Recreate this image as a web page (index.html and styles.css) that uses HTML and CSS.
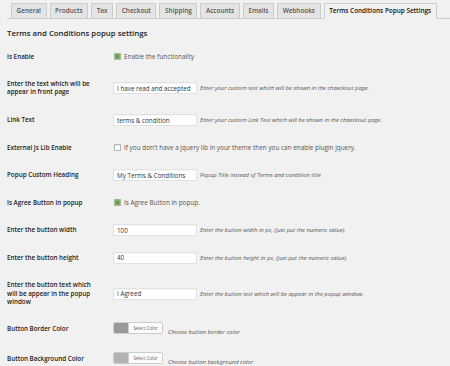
FILE: index.html
```html
<!DOCTYPE html>
<html lang="en">
<head>
  <meta charset="UTF-8">
  <title>Terms and Conditions popup settings</title>
  <link rel="stylesheet" href="styles.css">
</head>
<body>
  <div class="wrap">

    <nav class="nav-tabs">
      <a class="nav-tab">General</a>
      <a class="nav-tab">Products</a>
      <a class="nav-tab">Tax</a>
      <a class="nav-tab">Checkout</a>
      <a class="nav-tab">Shipping</a>
      <a class="nav-tab">Accounts</a>
      <a class="nav-tab">Emails</a>
      <a class="nav-tab">Webhooks</a>
      <a class="nav-tab active">Terms Conditions Popup Settings</a>
    </nav>

    <h2>Terms and Conditions popup settings</h2>

    <div class="form-table">

      <div class="row">
        <div class="row-label">Is Enable</div>
        <div class="row-field">
          <label class="check"><span class="box checked"></span>Enable the functionality</label>
        </div>
      </div>

      <div class="row">
        <div class="row-label">Enter the text which will be appear in front page</div>
        <div class="row-field">
          <input type="text" value="I have read and accepted">
          <span class="desc">Enter your custom text which will be shown in the chaeckout page.</span>
        </div>
      </div>

      <div class="row">
        <div class="row-label">Link Text</div>
        <div class="row-field">
          <input type="text" value="terms &amp; condition">
          <span class="desc">Enter your custom Link Text which will be shown in the chaeckout page.</span>
        </div>
      </div>

      <div class="row">
        <div class="row-label">External Js Lib Enable</div>
        <div class="row-field">
          <label class="check"><span class="box"></span>If you don't have a jquery lib in your theme then you can enable plugin jquery.</label>
        </div>
      </div>

      <div class="row">
        <div class="row-label">Popup Custom Heading</div>
        <div class="row-field">
          <input type="text" value="My Terms &amp; Conditions">
          <span class="desc">Popup Title instead of Terms and condition title</span>
        </div>
      </div>

      <div class="row">
        <div class="row-label">Is Agree Button in popup</div>
        <div class="row-field">
          <label class="check"><span class="box checked"></span>Is Agree Button in popup.</label>
        </div>
      </div>

      <div class="row">
        <div class="row-label">Enter the button width</div>
        <div class="row-field">
          <input type="text" value="100">
          <span class="desc">Enter the button width in px, (just put the numeric value).</span>
        </div>
      </div>

      <div class="row">
        <div class="row-label">Enter the button height</div>
        <div class="row-field">
          <input type="text" value="40">
          <span class="desc">Enter the button height in px, (just put the numeric value).</span>
        </div>
      </div>

      <div class="row">
        <div class="row-label">Enter the button text which will be appear in the popup window</div>
        <div class="row-field">
          <input type="text" value="I Agreed">
          <span class="desc">Enter the button text which will be appear in the popup window.</span>
        </div>
      </div>

      <div class="row row-color">
        <div class="row-label">Button Border Color</div>
        <div class="row-field">
          <span class="picker"><span class="swatch border-swatch"></span><span class="picker-btn">Select Color</span></span>
          <span class="desc desc-color">Choose button border color</span>
        </div>
      </div>

      <div class="row row-color">
        <div class="row-label">Button Background Color</div>
        <div class="row-field">
          <span class="picker"><span class="swatch bg-swatch"></span><span class="picker-btn">Select Color</span></span>
          <span class="desc desc-color">Choose button background color</span>
        </div>
      </div>

    </div>
  </div>
</body>
</html>
```

FILE: styles.css
```css
* {
  margin: 0;
  padding: 0;
  box-sizing: border-box;
}

body {
  font-family: "Open Sans", "Liberation Sans", sans-serif;
  background: #f1f1f1;
  color: #222;
  overflow: hidden;
}

.wrap {
  padding: 0 0 0 7px;
}

/* tabs */

.nav-tabs {
  display: flex;
  gap: 3px;
  padding: 3px 0 0 4px;
  border-bottom: 1px solid #ccc;
}

.nav-tab {
  display: block;
  height: 16px;
  margin-bottom: -1px;
  padding: 0 4.6px;
  background: #e4e4e4;
  border: 1px solid #ccc;
  color: #555;
  font-size: 6.4px;
  font-weight: 600;
  line-height: 14px;
  white-space: nowrap;
}

.nav-tab.active {
  background: #f1f1f1;
  border-bottom-color: #f1f1f1;
  color: #111;
}

h2 {
  margin: 9px 0 5px;
  font-size: 7.8px;
  font-weight: 600;
  line-height: 10px;
  color: #222;
}

/* rows */

.row {
  display: grid;
  grid-template-columns: 106px 1fr;
}

.row-label {
  align-self: start;
  width: 90px;
  padding: 9.6px 0;
  font-size: 6.3px;
  font-weight: 600;
  line-height: 8.35px;
}

.row-field {
  align-self: center;
  display: flex;
  align-items: center;
  padding: 6.5px 0;
}

.row-color {
  min-height: 30px;
}

.row-color .row-field {
  align-self: start;
  align-items: flex-start;
  padding-top: 6px;
}

input[type="text"] {
  width: 84px;
  height: 12px;
  padding: 0 3px;
  border: 1px solid #e2e2e2;
  background: #fff;
  box-shadow: inset 0 1px 1px rgba(0, 0, 0, 0.04);
  font-family: inherit;
  font-size: 6.3px;
  color: #333;
  outline: none;
}

.desc {
  margin-left: 3px;
  font-size: 5.8px;
  font-style: italic;
  color: #555;
  white-space: nowrap;
}

.desc-color {
  margin-left: 5px;
  margin-top: 6px;
  font-size: 5.9px;
}

/* checkboxes */

.check {
  display: flex;
  align-items: center;
  gap: 3px;
  padding-left: 1px;
  font-size: 6.4px;
  color: #555;
  white-space: nowrap;
}

.box {
  width: 7px;
  height: 7px;
  border: 1px solid #b4b9be;
  background: #fff;
  box-shadow: inset 0 1px 1px rgba(0, 0, 0, 0.1);
}

.box.checked {
  background: #6d9a4a;
  border-color: #a3b99a;
  box-shadow: inset 0 0 0 1px #88ad6e;
}

/* colour picker */

.picker {
  display: flex;
  height: 12px;
  border: 1px solid #ccc;
  border-radius: 2px;
  background: #f7f7f7;
  overflow: hidden;
}

.swatch {
  width: 15px;
  border-right: 1px solid #ccc;
}

.border-swatch {
  background: #999;
}

.bg-swatch {
  background: #b3b3b3;
}

.picker-btn {
  display: block;
  width: 33px;
  font-size: 4.4px;
  line-height: 10px;
  text-align: center;
  color: #666;
  background: #fbfbfb;
}
```
